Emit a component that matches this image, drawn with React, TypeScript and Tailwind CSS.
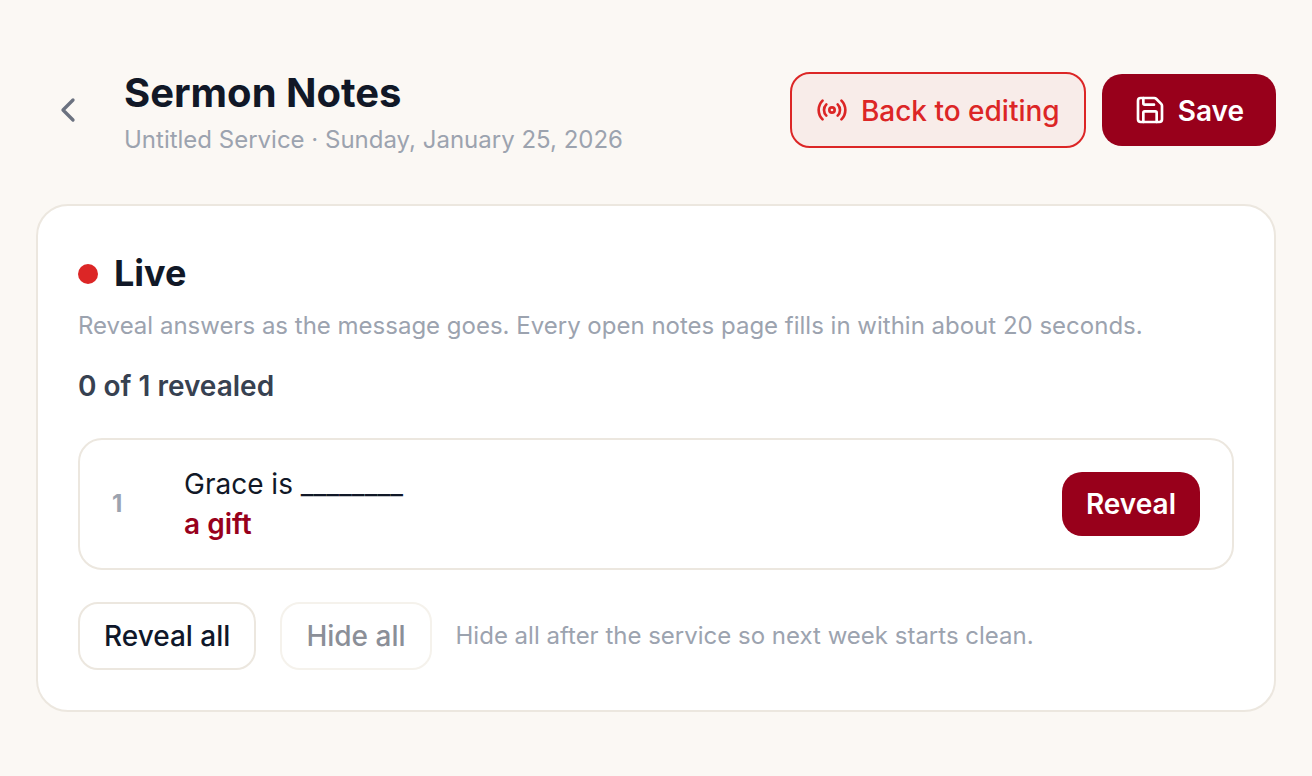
import React from 'react';
import { ChevronLeft, Radio, Save } from 'lucide-react';

const App: React.FC = () => {
  return (
    <div className="min-h-[776px] bg-[#fbf8f4] px-[36px] pt-[66px] font-['Inter',sans-serif]">
      {/* Header */}
      <div className="flex items-center justify-between">
        <div className="flex items-center">
          <button className="flex w-[88px] items-center pl-[12px] text-[#6b7280]">
            <ChevronLeft size={40} strokeWidth={2} />
          </button>
          <div>
            <h1 className="text-[40px] leading-[54px] font-bold text-[#111827]">Sermon Notes</h1>
            <p className="mt-[6px] text-[24px] leading-[28px] text-[#9ca3af]">
              Untitled Service · Sunday, January 25, 2026
            </p>
          </div>
        </div>
        <div className="flex items-center gap-[16px]">
          <button className="flex h-[76px] items-center gap-[13px] rounded-[20px] border-2 border-[#dc2626] bg-[#f8ece9] px-[24px] text-[28px] font-medium text-[#dc2626]">
            <Radio size={32} strokeWidth={2} />
            <span className="pt-[2px]">Back to editing</span>
          </button>
          <button className="flex h-[72px] items-center gap-[12px] rounded-[20px] bg-[#98001b] px-[32px] text-[28px] font-semibold text-white">
            <Save size={32} strokeWidth={2} />
            <span className="pt-[2px]">Save</span>
          </button>
        </div>
      </div>

      {/* Live card */}
      <div className="mt-[50px] rounded-[32px] border-2 border-[#ece7df] bg-white px-[40px] pt-[45px] pb-[40px]">
        <div className="flex items-center gap-[16px]">
          <span className="mt-[2px] h-[20px] w-[20px] rounded-full bg-[#dc2626]" />
          <h2 className="text-[36px] leading-[44px] font-bold text-[#111827]">Live</h2>
        </div>
        <p className="mt-[15px] text-[24px] leading-[32px] text-[#9ca3af]">
          Reveal answers as the message goes. Every open notes page fills in within about 20 seconds.
        </p>
        <p className="mt-[28px] text-[28px] leading-[32px] font-semibold text-[#374151]">0 of 1 revealed</p>

        <div className="mt-[36px] flex h-[132px] items-center rounded-[24px] border-2 border-[#ece7df] px-[32px]">
          <span className="w-[72px] text-[24px] font-bold text-[#9ca3af]">1</span>
          <div className="flex-1">
            <p className="text-[28px] leading-[40px] text-[#111827]">Grace is ________</p>
            <p className="text-[28px] leading-[40px] font-semibold text-[#98001b]">a gift</p>
          </div>
          <button className="h-[64px] rounded-[20px] bg-[#98001b] px-[24px] text-[28px] font-semibold text-white">
            Reveal
          </button>
        </div>

        <div className="mt-[32px] flex items-center gap-[24px]">
          <button className="h-[68px] rounded-[20px] border-2 border-[#ece7df] bg-white px-[24px] text-[28px] font-medium text-[#0f172a]">
            Reveal all
          </button>
          <button className="h-[68px] rounded-[20px] border-2 border-[#f5f2ec] bg-white px-[24px] text-[28px] font-medium text-[#8b8f98]">
            Hide all
          </button>
          <span className="text-[24px] text-[#9ca3af]">Hide all after the service so next week starts clean.</span>
        </div>
      </div>
    </div>
  );
};

export default App;
